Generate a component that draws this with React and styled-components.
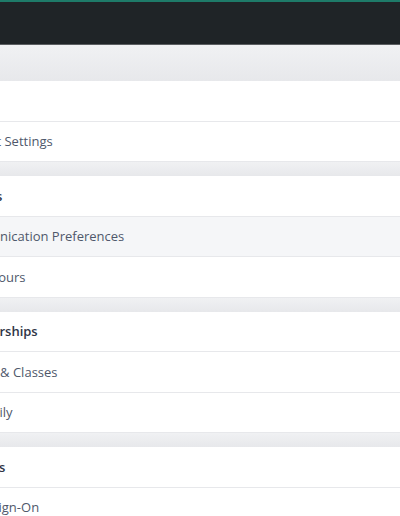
import React from "react";
import styled, { createGlobalStyle } from "styled-components";

const GlobalStyle = createGlobalStyle`
  html, body {
    margin: 0;
    padding: 0;
    overflow: hidden;
    background: #ffffff;
    font-family: "Open Sans", "Noto Sans", sans-serif;
  }
`;

const Page = styled.div`
  width: 400px;
  height: 516px;
  overflow: hidden;
  display: flex;
  flex-direction: column;
`;

const TopBar = styled.div`
  height: 42px;
  flex-shrink: 0;
  background: #1f2427;
  border-top: 2px solid #1e7b69;
  border-bottom: 1px solid #5b5e61;
`;

const Band = styled.div`
  flex-shrink: 0;
  height: ${p => p.$h}px;
  background: linear-gradient(#f0f1f3, #e7e8eb);
`;

const List = styled.div`
  display: flex;
  flex-direction: column;
  margin-left: -48px;
  width: 448px;
`;

const Row = styled.div`
  box-sizing: border-box;
  height: 40.5px;
  flex-shrink: 0;
  display: flex;
  align-items: center;
  background: ${p => (p.$active ? "#f5f6f8" : "#ffffff")};
  border-bottom: 1px solid #e7e8eb;
  font-size: 13px;
  font-weight: ${p => (p.$head ? 600 : 400)};
  color: ${p => (p.$head ? "#2e3547" : "#4f586b")};
  white-space: nowrap;
`;

const sections = [
  { title: "Profile", items: ["Account Settings"] },
  { title: "Settings", items: ["Communication Preferences", "Quiet Hours"], active: 0 },
  { title: "Memberships", items: ["Groups & Classes", "My Family"] },
  { title: "Sessions", items: ["Single Sign-On"] },
];

const App = () => {
  return (
    <Page>
      <GlobalStyle />
      <TopBar />
      <Band $h={36} />
      <List>
        {sections.map((section, i) => (
          <React.Fragment key={section.title}>
            {i > 0 && <Band $h={14} />}
            <Row $head>{section.title}</Row>
            {section.items.map((item, j) => (
              <Row key={item} $active={section.active === j}>
                {item}
              </Row>
            ))}
          </React.Fragment>
        ))}
      </List>
    </Page>
  );
};

export default App;
